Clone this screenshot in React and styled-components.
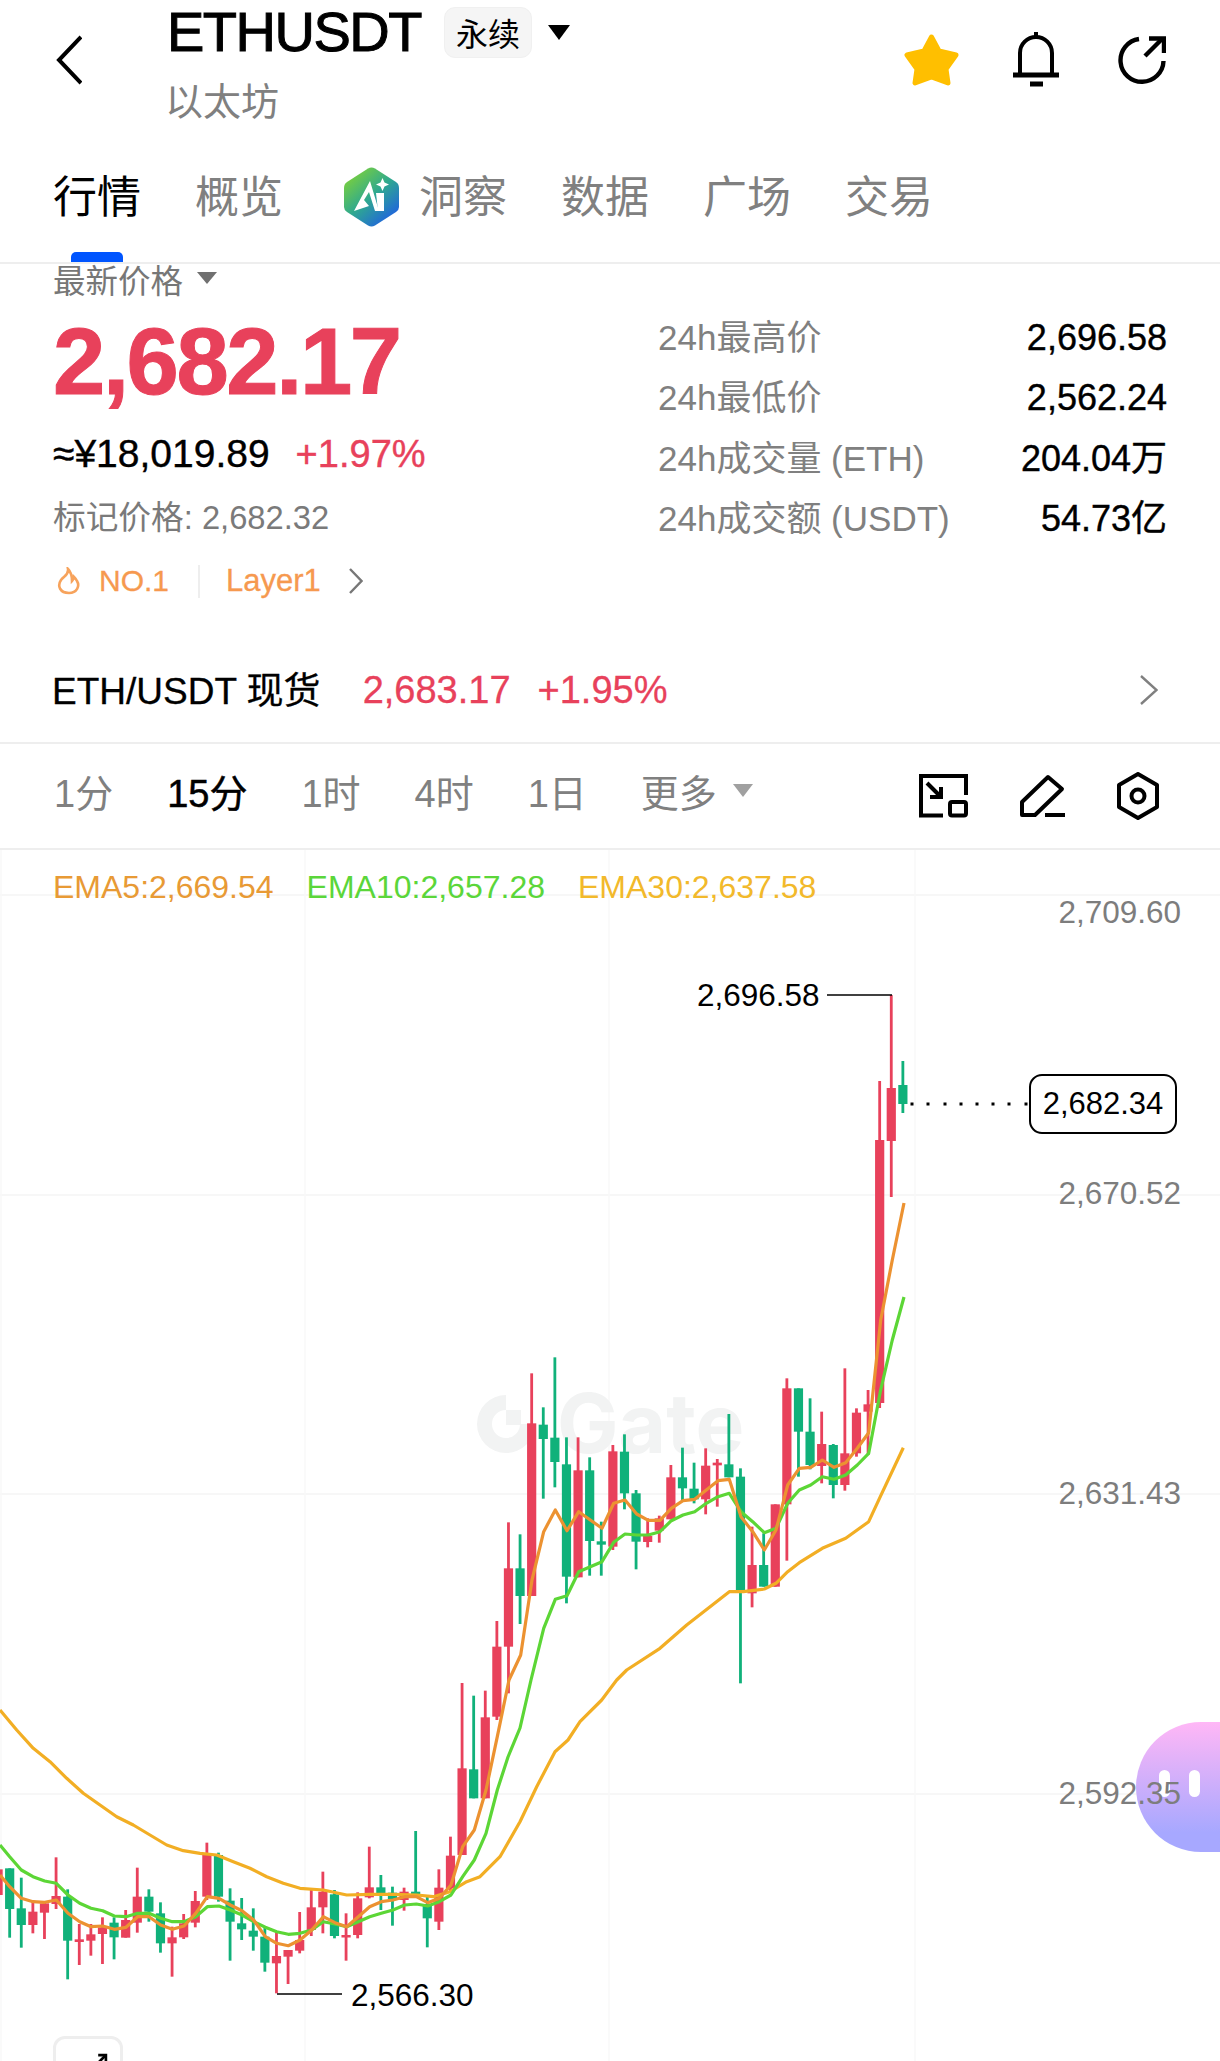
import React from "react";
import styled, { createGlobalStyle } from "styled-components";

const RED = "#e8415b";
const GREEN = "#10b17a";
const GREY = "#808080";
const FONT = '"Liberation Sans", "Noto Sans CJK SC", sans-serif';

const GlobalStyle = createGlobalStyle`
  html, body {
    margin: 0;
    padding: 0;
    background: #fff;
  }
  body {
    font-family: ${FONT};
  }
`;

const Page = styled.div`
  width: 1220px;
  height: 2061px;
  overflow: hidden;
  display: flex;
  flex-direction: column;
  background: #fff;
  color: #000;
`;

const Header = styled.header`
  height: 136px;
  flex: none;
  display: flex;
  align-items: flex-start;
  padding: 0 54px 0 56px;
  box-sizing: border-box;
`;

const BackButton = styled.div`
  width: 111px;
  margin-top: 35px;
  flex: none;
  display: flex;
`;

const TitleBlock = styled.div`
  flex: 1;
  display: flex;
  flex-direction: column;
`;

const TitleRow = styled.div`
  display: flex;
  align-items: center;
  height: 64px;
`;

const Symbol = styled.h1`
  margin: 0;
  font-size: 56px;
  font-weight: 400;
  line-height: 64px;
  letter-spacing: -1.5px;
  -webkit-text-stroke: 1px #000;
`;

const Badge = styled.span`
  margin-left: 23px;
  width: 88px;
  height: 51px;
  display: flex;
  align-items: center;
  justify-content: center;
  border-radius: 11px;
  background: #f5f5f5;
  border: 1px solid #f0f0f0;
  box-sizing: border-box;
  font-size: 32px;
`;

const Caret = styled.span`
  flex: none;
  display: block;
  width: 0;
  height: 0;
  margin-left: ${(p) => p.$gap ?? 16}px;
  border-left: ${(p) => p.$size}px solid transparent;
  border-right: ${(p) => p.$size}px solid transparent;
  border-top: ${(p) => p.$height}px solid ${(p) => p.$color};
`;

const SubTitle = styled.div`
  font-size: 38px;
  line-height: 46px;
  margin-top: 15px;
  margin-left: -2px;
  color: ${GREY};
`;

const Actions = styled.div`
  display: flex;
  align-items: center;
  gap: 56px;
  margin-top: 32px;
`;

const BellSlot = styled.span`
  display: flex;
  margin: 0 3px 0 -3px;
`;

const Tabs = styled.nav`
  position: relative;
  height: 128px;
  flex: none;
  display: flex;
  align-items: flex-start;
  padding: 32px 0 0 53px;
  gap: 54px;
  box-sizing: border-box;
  border-bottom: 2px solid #eeeeee;
`;

const Tab = styled.div`
  position: relative;
  display: flex;
  align-items: center;
  gap: 20px;
  height: 52px;
  font-size: 44px;
  color: ${(p) => (p.$active ? "#000" : GREY)};
  margin-left: ${(p) => p.$shift ?? 0}px;

  & > svg {
    margin-top: 5px;
  }
`;

const TabMark = styled.span`
  position: absolute;
  left: 18px;
  top: 84px;
  width: 52px;
  height: 10px;
  border-radius: 5px 5px 0 0;
  background: #0055ff;
`;

const Overview = styled.section`
  position: relative;
  height: 380px;
  flex: none;
  display: flex;
  justify-content: space-between;
  padding: 0 53px;
  box-sizing: border-box;
`;

const PriceColumn = styled.div`
  display: flex;
  flex-direction: column;
`;

const PriceCaption = styled.div`
  display: flex;
  align-items: center;
  height: 32px;
  margin-top: -2px;
  font-size: 32.5px;
  color: #777;
`;

const BigPrice = styled.div`
  margin-top: 15px;
  font-size: 94px;
  line-height: 106px;
  font-weight: 700;
  letter-spacing: -2.4px;
  color: ${RED};
  -webkit-text-stroke: 1px ${RED};
`;

const FiatRow = styled.div`
  display: flex;
  gap: 26px;
  margin-top: 17px;
  font-size: 39px;
  line-height: 44px;
  -webkit-text-stroke: 0.4px currentColor;
`;

const Change = styled.span`
  font-size: 38px;
  color: ${RED};
`;

const MarkPrice = styled.div`
  margin-top: 20px;
  font-size: 32.7px;
  line-height: 44px;
  color: #7a7a7a;
`;

const TagRow = styled.div`
  display: flex;
  align-items: center;
  margin-top: 19px;
  height: 44px;
  padding-left: 4px;
  font-size: 30px;
  color: #f6994f;
  -webkit-text-stroke: 0.3px currentColor;
`;

const RankText = styled.span`
  margin-left: 18px;
`;

const LayerText = styled.span`
  font-size: 31px;
`;

const TagDivider = styled.span`
  width: 2px;
  height: 33px;
  margin: 0 26px 0 29px;
  background: #eeeeee;
`;

const TagChevron = styled.span`
  display: flex;
  margin-left: 28px;
`;

const Stats = styled.div`
  margin-top: 45px;
  width: 509px;
  display: flex;
  flex-direction: column;
`;

const StatRow = styled.div`
  display: flex;
  justify-content: space-between;
  align-items: baseline;
  height: 60px;
`;

const StatLabel = styled.span`
  font-size: 35px;
  color: ${GREY};
`;

const StatValue = styled.span`
  font-size: 36px;
  -webkit-text-stroke: 0.4px #000;
`;

const SpotRow = styled.div`
  flex: none;
  height: 100px;
  display: flex;
  align-items: center;
  padding: 0 62px 6px 52px;
  font-size: 37px;
  box-sizing: border-box;
  border-bottom: 2px solid #eeeeee;
`;

const SpotName = styled.span`
  margin: 0 42px 4px 0;
  -webkit-text-stroke: 0.3px #000;
`;

const SpotValue = styled.span`
  font-size: 38px;
  margin-right: 27px;
  color: ${RED};
  -webkit-text-stroke: 0.3px currentColor;
`;

const Push = styled.div`
  flex: 1;
`;

const Intervals = styled.div`
  flex: none;
  height: 106px;
  display: flex;
  align-items: center;
  padding: 0 61px 11px 54px;
  font-size: 38px;
  gap: 54px;
  color: ${GREY};
  box-sizing: border-box;
  border-bottom: 2px solid #eeeeee;
`;

const Interval = styled.span`
  color: ${(p) => (p.$active ? "#000" : GREY)};
  -webkit-text-stroke: ${(p) => (p.$active ? "0.5px #000" : "0")};
  display: flex;
  align-items: center;
`;

const ToolGroup = styled.div`
  display: flex;
  align-items: center;
  gap: 52px;
  margin-top: 10px;
`;

const ChartArea = styled.div`
  position: relative;
  flex: 1;
  overflow: hidden;
`;

const ChartCanvas = styled.svg`
  position: absolute;
  left: 0;
  top: 0;
`;

const Legend = styled.div`
  position: absolute;
  left: 53px;
  top: 17px;
  display: flex;
  gap: 33px;
  font-size: 32px;
  line-height: 40px;
`;

const LegendItem = styled.span`
  color: ${(p) => p.$color};
`;

const AxisLabel = styled.span`
  position: absolute;
  right: 39px;
  top: ${(p) => p.$y - 850}px;
  transform: translateY(-50%);
  font-size: 31.5px;
  color: #7d7d7d;
  z-index: 2;
`;

const PriceMark = styled.span`
  position: absolute;
  left: ${(p) => p.$x}px;
  top: ${(p) => p.$y - 850}px;
  transform: translateY(-50%);
  font-size: 31.5px;
  color: #000;
`;

const LastPrice = styled.span`
  position: absolute;
  left: 1029px;
  top: 224px;
  width: 148px;
  height: 60px;
  display: flex;
  align-items: center;
  justify-content: center;
  box-sizing: border-box;
  border: 2px solid #000;
  border-radius: 13px;
  background: #fff;
  font-size: 31px;
`;

const FloatButton = styled.div`
  position: absolute;
  right: 0;
  top: 872px;
  width: 84px;
  height: 130px;
  display: flex;
  align-items: center;
  gap: 19px;
  padding: 0 0 0 23px;
  box-sizing: border-box;
  border-radius: 65px 0 0 65px;
  background: linear-gradient(180deg, #ffb7f6 0%, #a7a8ff 85%);
  z-index: 1;
`;

const FloatDot = styled.span`
  width: 11px;
  height: 27px;
  border-radius: 6px;
  background: #fff;
  margin-top: -8px;
`;

const ExpandBox = styled.div`
  position: absolute;
  left: 53px;
  top: 1186px;
  width: 70px;
  height: 70px;
  box-sizing: border-box;
  border: 3px solid #eeeeee;
  border-radius: 12px;
  background: #fff;
`;

const ExpandArrow = styled.span`
  position: absolute;
  left: 38px;
  top: 14px;
  display: flex;
`;

// [colour, wick top, body top, body bottom, wick bottom], read in crop pixels
const lowCandles = [
  ["r", 508, 508, 585, 585],
  ["g", 505, 505, 627, 713],
  ["g", 533, 625, 675, 743],
  ["r", 600, 635, 675, 700],
  ["r", 605, 610, 638, 717],
  ["r", 472, 588, 612, 627],
  ["g", 568, 590, 722, 838],
  ["r", 672, 718, 726, 795],
  ["r", 672, 703, 722, 767],
  ["r", 652, 682, 702, 792],
  ["g", 652, 668, 712, 778],
  ["r", 630, 660, 713, 713],
  ["r", 503, 590, 668, 698],
  ["g", 568, 590, 635, 665],
  ["g", 607, 640, 730, 758],
  ["r", 680, 712, 730, 830],
  ["r", 642, 670, 712, 717],
  ["r", 573, 603, 668, 682],
  ["r", 428, 465, 590, 600],
  ["g", 458, 465, 590, 605],
  ["g", 565, 602, 665, 782],
  ["g", 594, 670, 688, 720],
  ["g", 625, 692, 710, 752],
  ["g", 680, 710, 788, 815],
  ["r", 695, 768, 790, 880],
  ["r", 750, 750, 770, 852],
  ["r", 636, 720, 752, 760],
  ["r", 570, 622, 690, 708],
  ["r", 515, 575, 622, 700],
  ["g", 570, 583, 708, 715],
  ["r", 640, 705, 708, 782],
  ["r", 577, 595, 705, 715],
  ["r", 440, 562, 592, 595],
  ["g", 525, 562, 580, 630],
  ["g", 560, 578, 597, 677],
  ["r", 563, 575, 600, 632],
  ["g", 393, 575, 590, 590],
  ["g", 590, 612, 655, 742],
  ["r", 508, 563, 665, 690],
  ["r", 410, 467, 565, 575],
  ["r", -51, 205, 465, 465],
  ["g", -13, 208, 295, 295],
  ["r", -28, 52, 295, 295],
];

const highCandles = [
  ["r", 843, 920, 1130, 1140],
  ["r", 547, 685, 920, 1060],
  ["g", 583, 685, 768, 852],
  ["r", 100, 250, 768, 768],
  ["g", 202, 254, 297, 476],
  ["g", 52, 293, 366, 442],
  ["g", 292, 373, 710, 790],
  ["r", 292, 391, 712, 712],
  ["g", 352, 391, 603, 707],
  ["g", 545, 604, 614, 707],
  ["r", 315, 334, 620, 630],
  ["g", 283, 335, 460, 508],
  ["g", 450, 460, 605, 688],
  ["r", 535, 588, 606, 622],
  ["r", 527, 535, 572, 608],
  ["r", 375, 412, 538, 538],
  ["g", 323, 412, 445, 480],
  ["g", 368, 446, 478, 490],
  ["r", 325, 377, 478, 523],
  ["r", 357, 368, 376, 500],
  ["g", 222, 373, 412, 412],
  ["g", 385, 410, 750, 1030],
  ["r", 560, 675, 760, 802],
  ["g", 580, 675, 740, 740],
  ["r", 493, 493, 740, 740],
  ["r", 115, 145, 493, 662],
  ["g", 145, 145, 275, 410],
  ["g", 175, 275, 375, 388],
  ["r", 215, 312, 378, 430],
  ["g", 312, 315, 435, 475],
  ["r", 85, 340, 435, 452],
  ["r", 205, 218, 340, 350],
  ["r", 150, 193, 215, 345],
];

const lastCandles = [
  ["r", 1081, 1140, 1403, 1408],
  ["r", 995, 1088, 1141, 1197],
  ["g", 1061, 1085, 1104, 1113],
];

const candleX = (i) => 9.67 + 11.6 * i;

const candles = [
  ...lowCandles.map((c, i) => [i - 1, c[0], ...c.slice(1).map((v) => 1700 + v / 3)]),
  ...highCandles.map((c, i) => [i + 42, c[0], ...c.slice(1).map((v) => 1340 + v / 3)]),
  ...lastCandles.map((c, i) => [i + 75, ...c]),
];

const low = (pts) => pts.map(([x, y]) => [x / 3, 1700 + y / 3]);
const high = (pts) => pts.map(([x, y]) => [460 + x / 3, 1340 + y / 3]);

const ema5 = [
  ...low([[0, 525], [29, 560], [64, 595], [99, 605], [134, 607], [169, 600], [204, 640], [239, 665], [273, 680], [308, 678], [343, 688], [378, 682], [413, 650], [447, 650], [482, 675], [517, 688], [552, 678], [587, 640], [622, 590], [657, 595], [691, 615], [726, 632], [761, 660], [796, 710], [830, 730], [865, 737], [900, 720], [935, 690], [970, 650], [1005, 668], [1040, 680], [1075, 650], [1109, 620], [1144, 605], [1179, 600], [1214, 590], [1249, 590], [1283, 608], [1318, 595], [1353, 555], [1388, 440], [1423, 390], [1458, 270], [1492, 110]]),
  ...high([[147, 1020], [182, 945], [216, 720], [251, 575], [286, 510], [321, 572], [356, 515], [391, 540], [426, 565], [461, 490], [495, 480], [530, 522], [565, 541], [600, 541], [634, 505], [669, 482], [704, 478], [739, 450], [774, 422], [808, 418], [843, 530], [878, 575], [913, 630], [948, 570], [983, 435], [1018, 385], [1052, 382], [1087, 360], [1122, 382], [1157, 368], [1192, 325], [1226, 278]]),
  [880.7, 1320], [892.3, 1260], [904, 1203],
];

const ema10 = [
  ...low([[0, 435], [29, 470], [64, 510], [99, 530], [134, 543], [169, 550], [204, 585], [239, 610], [273, 625], [308, 632], [343, 648], [378, 650], [413, 640], [447, 640], [482, 655], [517, 665], [552, 665], [587, 650], [622, 620], [657, 618], [691, 630], [726, 645], [761, 665], [796, 682], [830, 695], [865, 703], [900, 700], [935, 690], [970, 665], [1005, 672], [1040, 680], [1075, 665], [1109, 650], [1144, 640], [1179, 630], [1214, 615], [1249, 612], [1283, 618], [1318, 605], [1353, 585], [1388, 530], [1423, 480], [1458, 400], [1492, 270]]),
  [508, 1757], [520, 1728],
  ...high([[213, 1020], [251, 865], [286, 778], [321, 767], [356, 695], [391, 680], [426, 665], [461, 607], [495, 582], [530, 585], [565, 585], [600, 575], [634, 542], [669, 525], [704, 515], [739, 490], [774, 470], [808, 460], [843, 515], [878, 545], [913, 578], [948, 565], [983, 490], [1018, 450], [1052, 435], [1087, 410], [1122, 418], [1157, 405], [1192, 375], [1226, 340], [1261, 155], [1297, 0]]),
  [904, 1297],
];

const ema30 = [
  ...low([[0, 30], [50, 90], [100, 145], [150, 185], [200, 235], [250, 280], [300, 315], [350, 350], [400, 375], [450, 405], [500, 435], [550, 452], [600, 460], [650, 465], [700, 485], [750, 505], [800, 530], [850, 550], [900, 565], [970, 570], [1040, 585], [1110, 583], [1180, 583], [1250, 585], [1300, 590], [1350, 575], [1400, 545], [1440, 530], [1500, 470]]),
  [520, 1821.7], [536.7, 1786.7], [555, 1751.7], [568, 1740], [580, 1721.7], [601.7, 1700],
  ...high([[470, 1020], [500, 990], [600, 925], [680, 855], [808, 755], [850, 755], [913, 747], [948, 730], [983, 695], [1018, 668], [1087, 625], [1157, 595], [1226, 545], [1261, 470], [1330, 323]]),
];

const toPoints = (pts) => pts.map(([x, y]) => `${x.toFixed(1)},${(y - 850).toFixed(1)}`).join(" ");

const gridRows = [895, 1195, 1494, 1794];
const gridCols = [1, 305, 609, 915];
const dots = [912, 928, 945, 961, 977, 993, 1009, 1026];

function Candle({ i, color, wickTop, bodyTop, bodyBottom, wickBottom }) {
  const x = candleX(i);
  const fill = color === "r" ? RED : GREEN;
  return (
    <g fill={fill}>
      <rect x={x - 1.4} y={wickTop - 850} width={2.8} height={wickBottom - wickTop} />
      <rect x={x - 4.6} y={bodyTop - 850} width={9.2} height={Math.max(bodyBottom - bodyTop, 2.5)} />
    </g>
  );
}

function EmaLine({ points, color }) {
  return <polyline points={toPoints(points)} fill="none" stroke={color} strokeWidth="3.2" strokeLinejoin="round" />;
}

function Chart() {
  return (
    <ChartCanvas width="1220" height="1211" viewBox="0 0 1220 1211">
      {gridRows.map((y) => (
        <line key={y} x1="0" x2="1220" y1={y - 850} y2={y - 850} stroke="#f4f4f4" strokeWidth="1.5" />
      ))}
      {gridCols.map((x) => (
        <line key={x} x1={x} x2={x} y1="0" y2="1211" stroke="#f8f8f8" strokeWidth="1.5" />
      ))}
      <g fill="#f2f3f3">
        <path fillRule="evenodd" d="M506 545 a29 29 0 1 0 29 29 h-15 a14 14 0 1 1 -14 -14 Z" />
        <rect x="506" y="560" width="15" height="15" />
        <text x="557" y="603" fontFamily="Inter, sans-serif" fontWeight="700" fontSize="82">Gate</text>
      </g>
      {candles.map(([i, color, wickTop, bodyTop, bodyBottom, wickBottom]) => (
        <Candle key={i} i={i} color={color} wickTop={wickTop} bodyTop={bodyTop} bodyBottom={bodyBottom} wickBottom={wickBottom} />
      ))}
      <EmaLine points={ema30} color="#f2ae24" />
      <EmaLine points={ema10} color="#5cd636" />
      <EmaLine points={ema5} color="#ec9231" />
      <line x1="827" x2="892" y1="145" y2="145" stroke="#000" strokeWidth="1.5" />
      <line x1="277" x2="342" y1="1144" y2="1144" stroke="#000" strokeWidth="1.5" />
      {dots.map((x) => (
        <rect key={x} x={x - 1.5} y="252.5" width="3" height="3" fill="#000" />
      ))}
    </ChartCanvas>
  );
}

function BackIcon() {
  return (
    <svg width="26" height="50" viewBox="0 0 26 50" fill="none" stroke="#000" strokeWidth="4">
      <path d="M25 2 L3 25 L25 48" />
    </svg>
  );
}

function StarIcon() {
  return (
    <svg width="56" height="52" viewBox="0 0 56 52">
      <path
        d="M27.5 3 L35 17 L52 21 L42 35 L44 49 L27.5 43 L11 49 L13 35 L3 21 L20 17 Z"
        fill="#ffbf00"
        stroke="#ffbf00"
        strokeWidth="5"
        strokeLinejoin="round"
      />
    </svg>
  );
}

function BellIcon() {
  return (
    <svg width="46" height="55" viewBox="0 0 46 55" fill="none" stroke="#000" strokeWidth="4">
      <path d="M23 0 V6" />
      <path d="M7 42 V21 A16 16 0 0 1 39 21 V42" />
      <path d="M0 43 H46" strokeWidth="5" />
      <path d="M17 52 H30" strokeWidth="5" />
    </svg>
  );
}

function RefreshIcon() {
  return (
    <svg width="48" height="48" viewBox="0 0 48 48" fill="none" stroke="#000" strokeWidth="4.4">
      <path d="M21 3 A21.5 21.5 0 1 0 45.5 25" />
      <path d="M27 20 L44 3" />
      <path d="M31 2.5 H46 V17" />
    </svg>
  );
}

function AiIcon() {
  return (
    <svg width="55" height="60" viewBox="0 0 55 60">
      <defs>
        <linearGradient id="aiBadge" x1="0.1" y1="0.1" x2="0.8" y2="0.95">
          <stop offset="0" stopColor="#7cd13a" />
          <stop offset="0.5" stopColor="#2fa98f" />
          <stop offset="1" stopColor="#1f62e0" />
        </linearGradient>
      </defs>
      <path
        d="M24 1.5 Q27.5 -0.5 31 1.5 L52 15 Q55 17 55 21 L55 40 Q55 43 52 45 L31 58.5 Q27.5 60.5 24 58.5 L3 45 Q0 43 0 40 L0 21 Q0 17 3 15 Z"
        fill="url(#aiBadge)"
      />
      <path d="M26 14 L10 44 L25 39 L20 33 L25 25 L31 44 L35 44 Z" fill="#fff" />
      <path d="M32 26 H40 V44 H34 Z" fill="#fff" />
      <path d="M38.5 11 L40.5 15.5 L45 17.5 L40.5 19.5 L38.5 24 L36.5 19.5 L32 17.5 L36.5 15.5 Z" fill="#fff" />
    </svg>
  );
}

function FlameIcon() {
  return (
    <svg width="24" height="28" viewBox="0 0 24 28" fill="none" stroke="#f7a35c" strokeWidth="2.6">
      <path d="M11 2 C12 8 7 9 4 13 C0 19 3 26 12 26 C20 26 23 19 20 14 C19 12 18 11 17 10 C17 12 16 13 15 14 C15 9 14 5 11 2 Z" />
    </svg>
  );
}

function Chevron({ width, height, color }) {
  return (
    <svg width={width} height={height} viewBox={`0 0 ${width} ${height}`} fill="none" stroke={color} strokeWidth="2.4">
      <path d={`M1 1 L${width - 1.5} ${height / 2} L1 ${height - 1}`} />
    </svg>
  );
}

function ScreenIcon() {
  return (
    <svg width="49" height="44" viewBox="0 0 49 44" fill="none" stroke="#000" strokeWidth="4">
      <path d="M24 41.5 H2 V2 H47 V21" />
      <rect x="31" y="28" width="16" height="13.5" rx="2" />
      <path d="M8 9 L21 22" />
      <path d="M22 13 V23 H11" />
    </svg>
  );
}

function PencilIcon() {
  return (
    <svg width="45" height="44" viewBox="0 0 45 44" fill="none" stroke="#000" strokeWidth="4" strokeLinejoin="round">
      <path d="M2 41 V28 L28 3 L42 15 L15 41 Z" />
      <path d="M25 41 H45" />
    </svg>
  );
}

function SettingIcon() {
  return (
    <svg width="42" height="48" viewBox="0 0 42 48" fill="none" stroke="#000" strokeWidth="4" strokeLinejoin="round">
      <path d="M21 2 L40 13 V35 L21 46 L2 35 V13 Z" />
      <circle cx="21" cy="24" r="6.5" />
    </svg>
  );
}

function ExpandIcon() {
  return (
    <svg width="14" height="14" viewBox="0 0 20 20" fill="none" stroke="#000" strokeWidth="3.8">
      <path d="M2 18 L16 4" />
      <path d="M6 3 H17 V14" />
    </svg>
  );
}

export default function App() {
  return (
    <Page>
      <GlobalStyle />
      <Header>
        <BackButton>
          <BackIcon />
        </BackButton>
        <TitleBlock>
          <TitleRow>
            <Symbol>ETHUSDT</Symbol>
            <Badge>永续</Badge>
            <Caret $size={11} $height={15} $color="#000" />
          </TitleRow>
          <SubTitle>以太坊</SubTitle>
        </TitleBlock>
        <Actions>
          <StarIcon />
          <BellSlot>
            <BellIcon />
          </BellSlot>
          <RefreshIcon />
        </Actions>
      </Header>

      <Tabs>
        <Tab $active>
          行情
          <TabMark />
        </Tab>
        <Tab>概览</Tab>
        <Tab $shift={7}>
          <AiIcon />
          洞察
        </Tab>
        <Tab>数据</Tab>
        <Tab>广场</Tab>
        <Tab>交易</Tab>
      </Tabs>

      <Overview>
        <PriceColumn>
          <PriceCaption>
            最新价格
            <Caret $size={10} $height={12} $color="#707070" $gap={14} />
          </PriceCaption>
          <BigPrice>2,682.17</BigPrice>
          <FiatRow>
            <span>≈¥18,019.89</span>
            <Change>+1.97%</Change>
          </FiatRow>
          <MarkPrice>标记价格: 2,682.32</MarkPrice>
          <TagRow>
            <FlameIcon />
            <RankText>NO.1</RankText>
            <TagDivider />
            <LayerText>Layer1</LayerText>
            <TagChevron>
              <Chevron width={14} height={26} color="#777" />
            </TagChevron>
          </TagRow>
        </PriceColumn>
        <Stats>
          <StatRow>
            <StatLabel>24h最高价</StatLabel>
            <StatValue>2,696.58</StatValue>
          </StatRow>
          <StatRow>
            <StatLabel>24h最低价</StatLabel>
            <StatValue>2,562.24</StatValue>
          </StatRow>
          <StatRow>
            <StatLabel>24h成交量 (ETH)</StatLabel>
            <StatValue>204.04万</StatValue>
          </StatRow>
          <StatRow>
            <StatLabel>24h成交额 (USDT)</StatLabel>
            <StatValue>54.73亿</StatValue>
          </StatRow>
        </Stats>
      </Overview>

      <SpotRow>
        <SpotName>ETH/USDT 现货</SpotName>
        <SpotValue>2,683.17</SpotValue>
        <SpotValue>+1.95%</SpotValue>
        <Push />
        <Chevron width={18} height={30} color="#808080" />
      </SpotRow>

      <Intervals>
        <Interval>1分</Interval>
        <Interval $active>15分</Interval>
        <Interval>1时</Interval>
        <Interval>4时</Interval>
        <Interval>1日</Interval>
        <Interval>
          更多
          <Caret $size={10} $height={13} $color="#a0a0a0" $gap={16} />
        </Interval>
        <Push />
        <ToolGroup>
          <ScreenIcon />
          <PencilIcon />
          <SettingIcon />
        </ToolGroup>
      </Intervals>

      <ChartArea>
        <Chart />
        <Legend>
          <LegendItem $color="#e89a35">EMA5:2,669.54</LegendItem>
          <LegendItem $color="#5bd63a">EMA10:2,657.28</LegendItem>
          <LegendItem $color="#f2b92b">EMA30:2,637.58</LegendItem>
        </Legend>
        <AxisLabel $y={912}>2,709.60</AxisLabel>
        <AxisLabel $y={1193}>2,670.52</AxisLabel>
        <AxisLabel $y={1493}>2,631.43</AxisLabel>
        <AxisLabel $y={1793}>2,592.35</AxisLabel>
        <PriceMark $x={697} $y={995}>2,696.58</PriceMark>
        <PriceMark $x={351} $y={1995}>2,566.30</PriceMark>
        <LastPrice>2,682.34</LastPrice>
        <FloatButton>
          <FloatDot />
          <FloatDot />
        </FloatButton>
        <ExpandBox>
          <ExpandArrow>
            <ExpandIcon />
          </ExpandArrow>
        </ExpandBox>
      </ChartArea>
    </Page>
  );
}
